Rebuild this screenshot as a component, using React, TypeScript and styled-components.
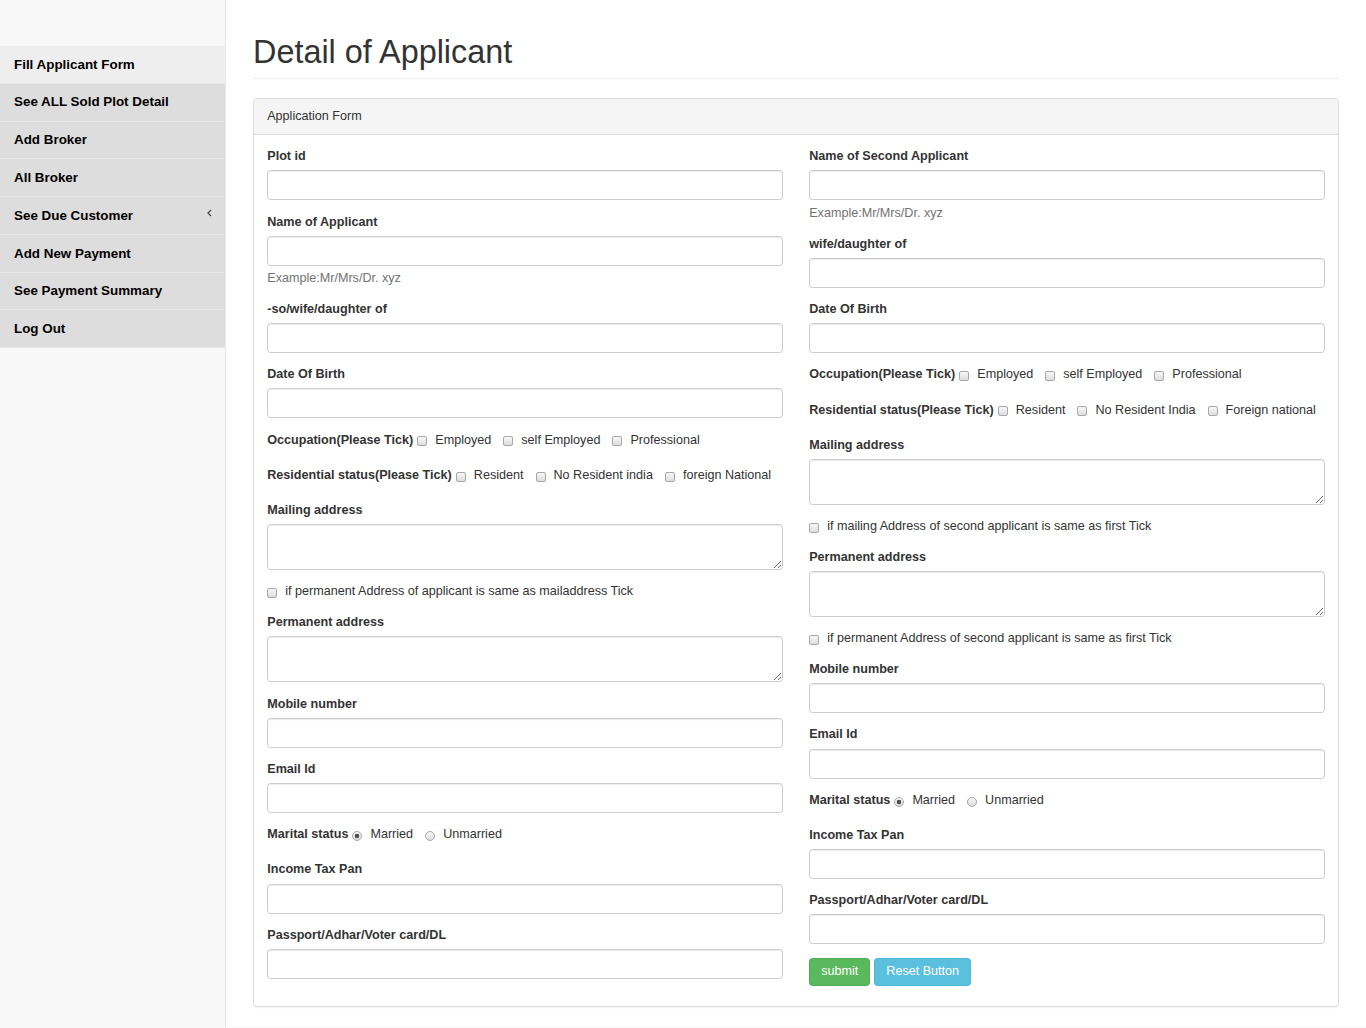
import React from 'react';
import styled, { createGlobalStyle } from 'styled-components';

const GlobalStyle = createGlobalStyle`
  html, body { margin: 0; padding: 0; }
  body {
    background: #f8f8f8;
    font-family: "Liberation Sans", Arial, Helvetica, sans-serif;
    font-size: 12.6px;
    line-height: 17.65px;
    color: #333;
  }
  * { box-sizing: border-box; }
`;

const Layout = styled.div`
  display: flex;
  align-items: flex-start;
  width: 1366px;
`;

const Sidebar = styled.nav`
  width: 225px;
  flex-shrink: 0;
  padding-top: 46px;
`;

const Menu = styled.ul`
  list-style: none;
  margin: 0;
  padding: 0;
`;

const MenuItem = styled.li<{ $active?: boolean }>`
  background: ${(p) => (p.$active ? '#eeeeee' : '#dddddd')};
  border-bottom: 1px solid #e7e7e7;
`;

const MenuLink = styled.a`
  display: flex;
  align-items: center;
  justify-content: space-between;
  padding: 9.6px 13px 9.6px 14px;
  font-size: 13.4px;
  font-weight: bold;
  line-height: 17.6px;
  color: #000;
  text-decoration: none;
`;

const Chevron = styled.svg`
  width: 5px;
  height: 8px;
  margin-top: -6px;
`;

const PageWrapper = styled.main`
  flex: 1;
  min-width: 0;
  background: #fff;
  border-left: 1px solid #e7e7e7;
  padding: 35.2px 27px 20px;
`;

const PageHeader = styled.h1`
  margin: 0 0 19px;
  padding-bottom: 7.9px;
  border-bottom: 1px solid #eee;
  font-size: 32.4px;
  font-weight: 400;
  line-height: 34.8px;
  color: #333;
`;

const Panel = styled.section`
  border: 1px solid #ddd;
  border-radius: 3.5px;
  background: #fff;
  box-shadow: 0 1px 1px rgba(0, 0, 0, 0.05);
`;

const PanelHeading = styled.div`
  padding: 8.8px 13.2px;
  background: #f5f5f5;
  border-bottom: 1px solid #ddd;
  border-radius: 3px 3px 0 0;
  line-height: 17.6px;
  color: #333;
`;

const PanelBody = styled.div`
  display: grid;
  grid-template-columns: 1fr 1fr;
  column-gap: 26.4px;
  align-items: start;
  padding: 13.24px 13.24px 14px;
`;

const Column = styled.div`
  min-width: 0;
`;

const FormGroup = styled.div`
  margin-bottom: 13.24px;
`;

const FieldLabel = styled.label`
  display: block;
  margin-bottom: 4.41px;
  font-weight: bold;
  line-height: 17.65px;
`;

const TextInput = styled.input`
  display: block;
  width: 100%;
  height: 30px;
  padding: 5px 10.6px;
  border: 1px solid #ccc;
  border-radius: 3.5px;
  box-shadow: inset 0 1px 1px rgba(0, 0, 0, 0.075);
  font-family: inherit;
  font-size: 12.6px;
  color: #555;
  background: #fff;
`;

const TextArea = styled.textarea`
  display: block;
  width: 100%;
  height: 46px;
  padding: 5px 10.6px;
  border: 1px solid #ccc;
  border-radius: 3.5px;
  box-shadow: inset 0 1px 1px rgba(0, 0, 0, 0.075);
  font-family: inherit;
  font-size: 12.6px;
  color: #555;
  background: #fff;
`;

const HelpText = styled.span`
  display: block;
  margin-top: 4.41px;
  color: #737373;
  line-height: 17.65px;
`;

const InlineRow = styled.div`
  display: flex;
  align-items: center;
  height: 22.06px;
  padding-bottom: 4.41px;
  white-space: nowrap;
`;

const InlineTitle = styled.span`
  font-weight: bold;
`;

const Option = styled.label<{ $first?: boolean }>`
  display: inline-flex;
  align-items: center;
  margin-left: ${(p) => (p.$first ? '4px' : '12px')};
`;

const Box = styled.input`
  appearance: none;
  -webkit-appearance: none;
  flex-shrink: 0;
  width: 10px;
  height: 10px;
  margin: 2px 8px 0 0;
  border: 1px solid #a8a8a8;
  border-radius: 2px;
  background: linear-gradient(#f7f7f7, #dddddd);
`;

const Round = styled.input`
  appearance: none;
  -webkit-appearance: none;
  flex-shrink: 0;
  width: 10px;
  height: 10px;
  margin: 2px 8px 0 0;
  border: 1px solid #a8a8a8;
  border-radius: 50%;
  background: linear-gradient(#f7f7f7, #dddddd);
  &:checked {
    background: radial-gradient(circle, #505050 0 2px, rgba(0, 0, 0, 0) 2.6px),
      linear-gradient(#f7f7f7, #dddddd);
  }
`;

const SingleCheck = styled.label`
  display: flex;
  align-items: center;
  height: 17.65px;
`;

const ButtonRow = styled.div`
  display: flex;
  gap: 4px;
  margin-top: 2px;
`;

const Button = styled.button<{ $variant: 'success' | 'info' }>`
  height: 28px;
  padding: 0 11px;
  border: 1px solid ${(p) => (p.$variant === 'success' ? '#4cae4c' : '#46b8da')};
  border-radius: 3.5px;
  background: ${(p) => (p.$variant === 'success' ? '#5cb85c' : '#5bc0de')};
  color: #fff;
  font-family: inherit;
  font-size: 12.6px;
  line-height: 17.6px;
  cursor: pointer;
`;

type Field =
  | { kind: 'input'; label: string; help?: string }
  | { kind: 'textarea'; label: string }
  | { kind: 'tick'; label: string; options: string[] }
  | { kind: 'radio'; label: string; options: string[] }
  | { kind: 'check'; label: string }
  | { kind: 'buttons' };

const occupation = ['Employed', 'self Employed', 'Professional'];

const leftFields: Field[] = [
  { kind: 'input', label: 'Plot id' },
  { kind: 'input', label: 'Name of Applicant', help: 'Example:Mr/Mrs/Dr. xyz' },
  { kind: 'input', label: '-so/wife/daughter of' },
  { kind: 'input', label: 'Date Of Birth' },
  { kind: 'tick', label: 'Occupation(Please Tick)', options: occupation },
  { kind: 'tick', label: 'Residential status(Please Tick)', options: ['Resident', 'No Resident india', 'foreign National'] },
  { kind: 'textarea', label: 'Mailing address' },
  { kind: 'check', label: 'if permanent Address of applicant is same as mailaddress Tick' },
  { kind: 'textarea', label: 'Permanent address' },
  { kind: 'input', label: 'Mobile number' },
  { kind: 'input', label: 'Email Id' },
  { kind: 'radio', label: 'Marital status', options: ['Married', 'Unmarried'] },
  { kind: 'input', label: 'Income Tax Pan' },
  { kind: 'input', label: 'Passport/Adhar/Voter card/DL' },
];

const rightFields: Field[] = [
  { kind: 'input', label: 'Name of Second Applicant', help: 'Example:Mr/Mrs/Dr. xyz' },
  { kind: 'input', label: 'wife/daughter of' },
  { kind: 'input', label: 'Date Of Birth' },
  { kind: 'tick', label: 'Occupation(Please Tick)', options: occupation },
  { kind: 'tick', label: 'Residential status(Please Tick)', options: ['Resident', 'No Resident India', 'Foreign national'] },
  { kind: 'textarea', label: 'Mailing address' },
  { kind: 'check', label: 'if mailing Address of second applicant is same as first Tick' },
  { kind: 'textarea', label: 'Permanent address' },
  { kind: 'check', label: 'if permanent Address of second applicant is same as first Tick' },
  { kind: 'input', label: 'Mobile number' },
  { kind: 'input', label: 'Email Id' },
  { kind: 'radio', label: 'Marital status', options: ['Married', 'Unmarried'] },
  { kind: 'input', label: 'Income Tax Pan' },
  { kind: 'input', label: 'Passport/Adhar/Voter card/DL' },
  { kind: 'buttons' },
];

const menu = [
  'Fill Applicant Form',
  'See ALL Sold Plot Detail',
  'Add Broker',
  'All Broker',
  'See Due Customer',
  'Add New Payment',
  'See Payment Summary',
  'Log Out',
];

function FieldView({ field, name }: { field: Field; name: string }) {
  switch (field.kind) {
    case 'input':
      return (
        <FormGroup>
          <FieldLabel>{field.label}</FieldLabel>
          <TextInput type="text" />
          {field.help && <HelpText>{field.help}</HelpText>}
        </FormGroup>
      );
    case 'textarea':
      return (
        <FormGroup>
          <FieldLabel>{field.label}</FieldLabel>
          <TextArea rows={2} />
        </FormGroup>
      );
    case 'tick':
      return (
        <FormGroup>
          <InlineRow>
            <InlineTitle>{field.label}</InlineTitle>
            {field.options.map((o, i) => (
              <Option key={o} $first={i === 0}>
                <Box type="checkbox" />
                {o}
              </Option>
            ))}
          </InlineRow>
        </FormGroup>
      );
    case 'radio':
      return (
        <FormGroup>
          <InlineRow>
            <InlineTitle>{field.label}</InlineTitle>
            {field.options.map((o, i) => (
              <Option key={o} $first={i === 0}>
                <Round type="radio" name={name} defaultChecked={i === 0} />
                {o}
              </Option>
            ))}
          </InlineRow>
        </FormGroup>
      );
    case 'check':
      return (
        <FormGroup>
          <SingleCheck>
            <Box type="checkbox" />
            {field.label}
          </SingleCheck>
        </FormGroup>
      );
    case 'buttons':
      return (
        <ButtonRow>
          <Button type="submit" $variant="success">submit</Button>
          <Button type="reset" $variant="info">Reset Button</Button>
        </ButtonRow>
      );
  }
}

export default function App() {
  return (
    <>
      <GlobalStyle />
      <Layout>
        <Sidebar>
          <Menu>
            {menu.map((m, i) => (
              <MenuItem key={m} $active={i === 0}>
                <MenuLink href="#">
                  {m}
                  {m === 'See Due Customer' && (
                    <Chevron viewBox="0 0 5 8">
                      <polyline points="4,1 1,4 4,7" fill="none" stroke="#444" strokeWidth="1.2" />
                    </Chevron>
                  )}
                </MenuLink>
              </MenuItem>
            ))}
          </Menu>
        </Sidebar>
        <PageWrapper>
          <PageHeader>Detail of Applicant</PageHeader>
          <Panel>
            <PanelHeading>Application Form</PanelHeading>
            <PanelBody>
              <Column>
                {leftFields.map((f, i) => (
                  <FieldView key={i} field={f} name="marital1" />
                ))}
              </Column>
              <Column>
                {rightFields.map((f, i) => (
                  <FieldView key={i} field={f} name="marital2" />
                ))}
              </Column>
            </PanelBody>
          </Panel>
        </PageWrapper>
      </Layout>
    </>
  );
}
